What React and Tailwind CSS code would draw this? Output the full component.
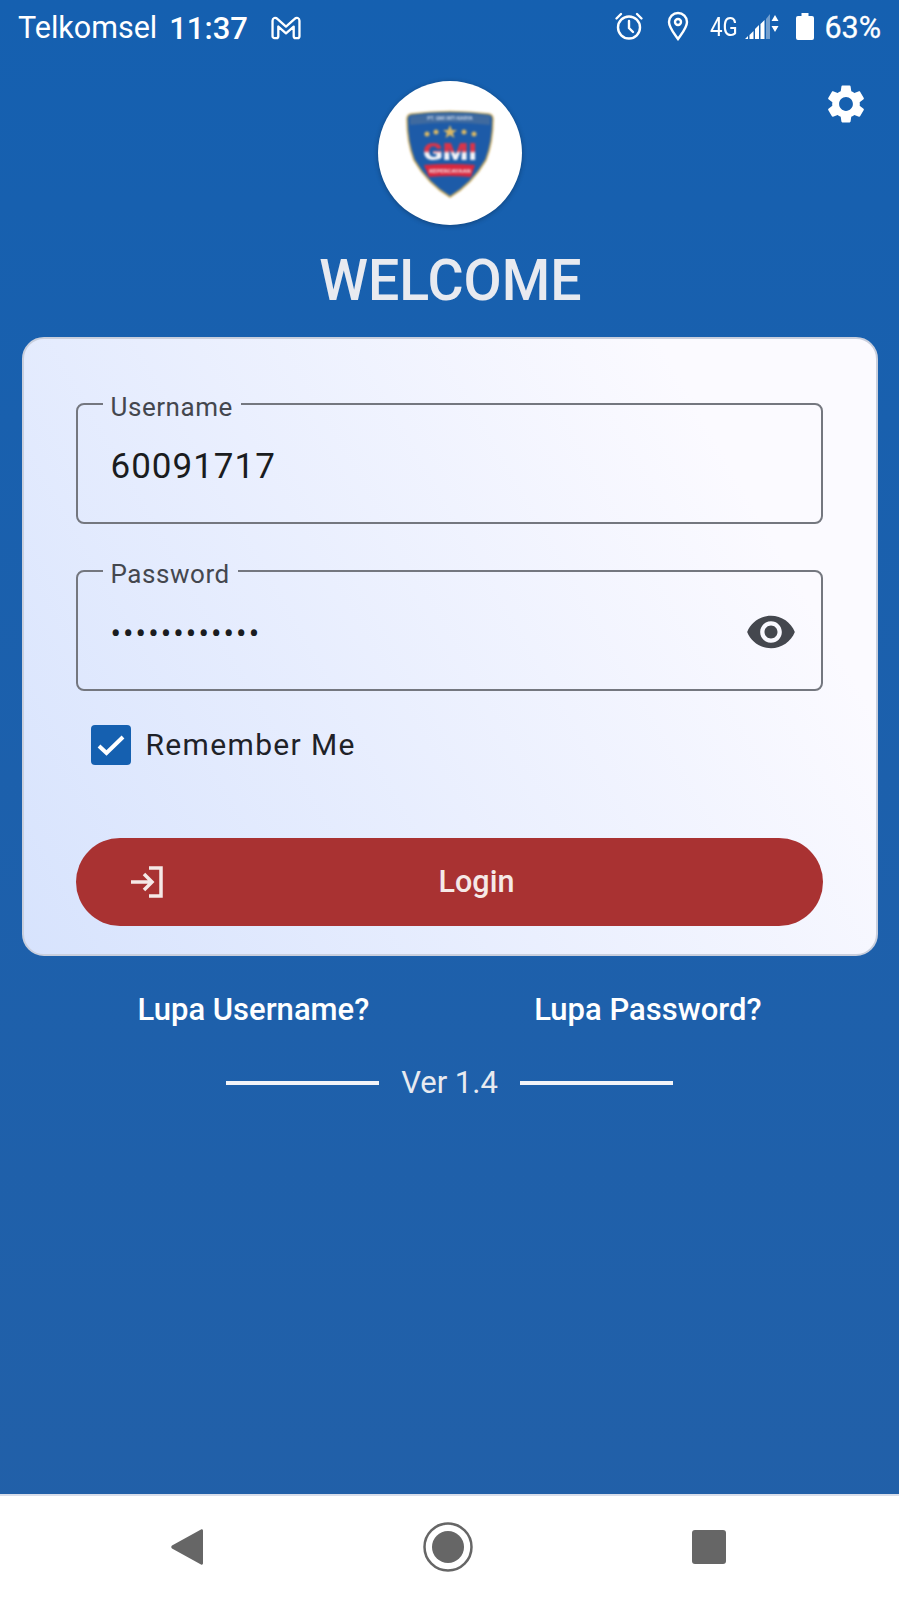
import { useState } from 'react';

function StatusBar() {
  return (
    <div className="flex h-[54px] shrink-0 items-center pl-[18px] pr-[18px] text-white">
      <span className="pt-[2px] text-[30.5px] leading-none">Telkomsel</span>
      <span className="ml-[12px] pt-[2px] text-[31px] font-medium leading-none">11:37</span>
      <svg className="ml-[22px]" width="32" height="25" viewBox="0 0 32 26" fill="none" stroke="white" strokeWidth="2.4" strokeLinejoin="round">
        <path d="M2 22V6c0-3 3-4 5-2l9 8 9-8c2-2 5-1 5 2v16c0 1-1 2-2 2h-2c-1 0-2-1-2-2V12l-8 7-8-7v10c0 1-1 2-2 2H4c-1 0-2-1-2-2z" />
      </svg>
      <div className="ml-auto flex items-center">
        <svg className="-mt-[2px]" width="30" height="30" viewBox="0 0 30 30" fill="none" stroke="white" strokeWidth="2.4" strokeLinecap="round">
          <circle cx="15" cy="16.500" r="11" />
          <path d="M15 10v7l4 4M2.500 7.500 7 3M27.500 7.500 23 3" />
        </svg>
        <svg className="-mt-[2px] ml-[22px]" width="24" height="30" viewBox="0 0 24 30" fill="none" stroke="white" strokeWidth="2.4">
          <path d="M12 28C7 21 3 16.500 3 11a9 9 0 0 1 18 0c0 5.500-4 10-9 17z" />
          <circle cx="12" cy="11" r="3" />
        </svg>
        <span className="ml-[20px] w-[28px] origin-left text-[26px] leading-none [transform:scaleX(0.86)]">4G</span>
        <svg className="ml-[5px]" width="38" height="30" viewBox="0 0 38 30" fill="white">
          <path d="M2 27h3v-3zM6.500 27h4v-8l-4 4zM12 27h4V13l-4 4z" />
          <path d="M17.500 27h4V8l-4 4z" />
          <path d="M23 27h4V2l-4 5z" opacity="0.4" />
          <path d="M29 10h7l-3.500-6zM29 15h7l-3.500 6z" transform="translate(-0.500 -1)" />
        </svg>
        <svg className="ml-[14px]" width="20" height="30" viewBox="0 0 20 30" fill="white">
          <path d="M6.500 1h7v3h3.500a2 2 0 0 1 2 2v20a2 2 0 0 1-2 2H3a2 2 0 0 1-2-2V6a2 2 0 0 1 2-2h3.500z" />
        </svg>
        <span className="ml-[9px] pt-[2px] text-[30.5px] leading-none [-webkit-text-stroke:0.3px_white]">63%</span>
      </div>
    </div>
  );
}

function Logo() {
  return (
    <div className="flex h-[144px] w-[144px] items-center justify-center rounded-full bg-white shadow-[0_1px_5px_rgba(0,0,0,0.3)]">
      <svg width="88" height="88" viewBox="0 0 88 88" className="mt-[2px] blur-[0.9px]">
        <defs>
          <linearGradient id="gmi" x1="0" y1="0" x2="0" y2="1">
            <stop offset="0.45" stopColor="#d8354a" />
            <stop offset="0.55" stopColor="#f3f4f8" />
          </linearGradient>
        </defs>
        <path d="M1 9 Q1 5 5 4 Q44 -1 83 4 Q87 5 87 9 Q87 32 80 50 Q66 74 44 87 Q22 74 8 50 Q1 32 1 9z" fill="#1d5ba8" stroke="#c9a95c" strokeWidth="1.600" />
        <path d="M4 6 Q44 1 84 6 L84 15 Q44 10 4 15z" fill="#3f6a9f" />
        <text x="44" y="10" textAnchor="middle" fontSize="5" fontWeight="700" fill="#c8d6ea" fontFamily="Roboto, sans-serif">PT. GMI INTI KARYA</text>
        <g fill="#d8b765">
          <circle cx="21" cy="24" r="2.500" />
          <circle cx="30" cy="22" r="2.500" />
          <path d="M44 15l2 5h5l-4 3 1.500 5-4.500-3-4.500 3 1.500-5-4-3h5z" />
          <circle cx="58" cy="22" r="2.500" />
          <circle cx="68" cy="24" r="2.500" />
        </g>
        <text x="44" y="50" textAnchor="middle" fontSize="24" fontWeight="900" textLength="54" lengthAdjust="spacingAndGlyphs" fill="url(#gmi)" fontFamily="Roboto, sans-serif">GMI</text>
        <path d="M18 55 Q44 53 69 55 L65 67 Q44 65 23 67z" fill="#d8283f" />
        <text x="44" y="63" textAnchor="middle" fontSize="6" fontWeight="700" fill="#f6dfe2" fontFamily="Roboto, sans-serif">KEPERCAYAAN</text>
      </svg>
    </div>
  );
}

function OutlinedField({ label, children }) {
  return (
    <fieldset className="h-[136px] rounded-[8px] border-2 border-[#74777f] pl-[33px] pr-[24px]">
      <legend className="-ml-[8px] px-[8px] pt-[6px] text-[26px] leading-[26px] tracking-[0.55px] text-[#44474e]">{label}</legend>
      {children}
    </fieldset>
  );
}

export default function App() {
  const [showPassword, setShowPassword] = useState(false);
  const [remember, setRemember] = useState(true);

  return (
    <div
      className="flex h-[1599px] w-[899px] flex-col bg-gradient-to-b from-[#1560b0] to-[#2260a8]"
      style={{ fontFamily: 'Roboto, "Noto Sans", sans-serif' }}
    >
      <StatusBar />

      <div className="relative flex flex-1 flex-col items-center">
        <button className="absolute right-[30px] top-[27px] text-white">
          <svg width="46" height="46" viewBox="0 0 24 24" fill="currentColor">
            <path d="M19.140 12.940c.04-.3.06-.61.06-.94 0-.32-.02-.64-.07-.94l2.030-1.580c.18-.14.23-.41.12-.61l-1.920-3.320c-.12-.22-.37-.29-.59-.22l-2.390.96c-.5-.38-1.030-.7-1.620-.94l-.36-2.540c-.04-.24-.24-.41-.48-.41h-3.840c-.24 0-.43.17-.47.41l-.36 2.540c-.59.24-1.130.57-1.620.94l-2.390-.96c-.22-.08-.47 0-.59.22L2.740 8.870c-.12.21-.08.47.12.61l2.030 1.580c-.05.3-.09.63-.09.94s.02.64.07.94l-2.030 1.580c-.18.14-.23.41-.12.61l1.920 3.320c.12.22.37.29.59.22l2.390-.96c.5.38 1.030.7 1.620.94l.36 2.540c.05.24.24.41.48.41h3.840c.24 0 .44-.17.47-.41l.36-2.540c.59-.24 1.130-.56 1.620-.94l2.390.96c.22.08.47 0 .59-.22l1.920-3.320c.12-.22.07-.47-.12-.61l-2.010-1.580zM12 15.600c-1.980 0-3.600-1.620-3.600-3.600s1.620-3.600 3.600-3.600 3.600 1.620 3.600 3.600-1.620 3.600-3.600 3.600z" />
          </svg>
        </button>

        <div className="mt-[27px]">
          <Logo />
        </div>
        <h1 className="ml-[2px] mt-[21px] text-[58px] font-medium leading-[68px] text-[#e8eaf0] [transform:scaleX(0.955)]">WELCOME</h1>

        <div className="mt-[23px] h-[619px] w-[856px] rounded-[22px] border-2 border-[#c9cfdd] bg-[linear-gradient(60deg,#d7e3fd,#fbfaff_82%)] pl-[52px] pr-[53px] pt-[49px]">
          <OutlinedField label="Username">
            <div className="pt-[25px] text-[35px] leading-[44px] tracking-[1px] text-[#1a1c20]">60091717</div>
          </OutlinedField>

          <div className="mt-[31px]">
            <OutlinedField label="Password">
              <div className="flex items-center justify-between pt-[19px]">
                <span className="mt-[4px] text-[31px] leading-[44px] tracking-[2.1px] text-[#1a1c20]">
                  {showPassword ? 'password1234' : '••••••••••••'}
                </span>
                <button onClick={() => setShowPassword(!showPassword)} className="text-[#44474e]">
                  <svg width="52" height="52" viewBox="0 0 24 24" fill="currentColor">
                    <path d="M12 4.500C7 4.500 2.730 7.610 1 12c1.730 4.390 6 7.500 11 7.500s9.270-3.110 11-7.500c-1.730-4.390-6-7.500-11-7.500zM12 17c-2.760 0-5-2.240-5-5s2.240-5 5-5 5 2.240 5 5-2.240 5-5 5zm0-8c-1.660 0-3 1.340-3 3s1.340 3 3 3 3-1.340 3-3-1.340-3-3-3z" />
                  </svg>
                </button>
              </div>
            </OutlinedField>
          </div>

          <label className="ml-[15px] mt-[34px] flex items-center">
            <input type="checkbox" className="sr-only" checked={remember} onChange={() => setRemember(!remember)} />
            <span className="flex h-[40px] w-[40px] items-center justify-center rounded-[4px] bg-[#1560b0]">
              {remember && (
                <svg width="30" height="30" viewBox="0 0 30 30" fill="none" stroke="white" strokeWidth="4">
                  <path d="M3 16l7.500 7L27 7" />
                </svg>
              )}
            </span>
            <span className="ml-[15px] text-[30px] leading-none tracking-[1.35px] text-[#1f2228]">Remember Me</span>
          </label>

          <button className="relative mt-[73px] flex h-[88px] w-full items-center justify-center rounded-full bg-[#a93232] pl-[55px] text-[30.5px] font-medium text-[#f5e9e7]">
            <svg className="absolute left-[53px] top-[27px]" width="36" height="34" viewBox="0 0 36 34" fill="none" stroke="#f5e9e7" strokeWidth="3.500">
              <path d="M20 3h12v28H20" />
              <path d="M2 17h20M15 9l8 8-8 8" />
            </svg>
            Login
          </button>
        </div>

        <div className="mt-[34px] flex w-[624px] justify-between text-[31px] font-medium leading-[40px] text-white">
          <a>Lupa Username?</a>
          <a>Lupa Password?</a>
        </div>

        <div className="mt-[35px] flex items-center text-[31px] leading-[36px] text-[#e8eaf0]">
          <span className="h-[4px] w-[153px] bg-[#f1f3f8]" />
          <span className="mx-[22px]">Ver 1.4</span>
          <span className="h-[4px] w-[153px] bg-[#f1f3f8]" />
        </div>
      </div>

      <div className="flex h-[105px] shrink-0 items-center border-t-2 border-[#d9deea] bg-white">
        <div className="flex w-full items-center justify-center gap-[219px] pb-[2px] pr-[3px]">
          <svg width="34" height="38" viewBox="0 0 34 38" fill="#666666">
            <path d="M31 1.500c1-.6 2-.1 2 1.200v32.600c0 1.300-1 1.800-2 1.200L2 20.500c-1-.8-1-2.200 0-3z" />
          </svg>
          <svg width="50" height="50" viewBox="0 0 50 50">
            <circle cx="25" cy="25" r="23.500" fill="none" stroke="#666666" strokeWidth="2.500" />
            <circle cx="25" cy="25" r="16" fill="#666666" />
          </svg>
          <div className="h-[34px] w-[34px] rounded-[3px] bg-[#666666]" />
        </div>
      </div>
    </div>
  );
}
